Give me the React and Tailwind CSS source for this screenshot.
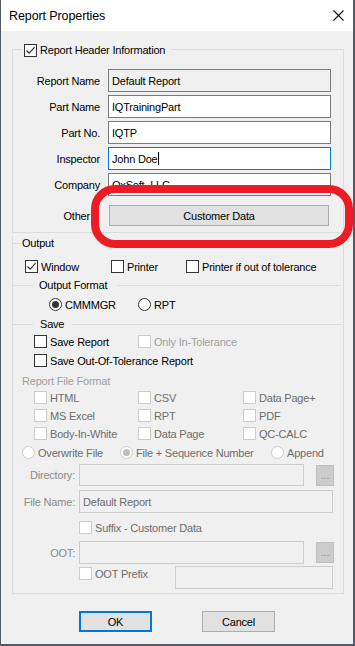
import React from 'react';

const FONT = { fontFamily: '"Liberation Sans", Arial, sans-serif' };

const Check = ({ checked, disabled }) => (
    <span className={`w-[13px] h-[13px] shrink-0 border ${disabled ? 'border-[#cccccc] bg-white' : 'border-[#333333] bg-white'} flex items-center justify-center`}>
        {checked && (
            <svg width="11" height="11" viewBox="0 0 11 11">
                <path d="M1.5 5.5 L4.2 8.2 L9.6 2.2" fill="none" stroke="#333333" strokeWidth="1.2" />
            </svg>
        )}
    </span>
);

const Radio = ({ checked, disabled }) => (
    <span className={`w-[13px] h-[13px] shrink-0 rounded-full border ${disabled ? 'border-[#cccccc]' : 'border-[#333333]'} bg-white flex items-center justify-center`}>
        {checked && <span className={`w-[7px] h-[7px] rounded-full ${disabled ? 'bg-[#bcbcbc]' : 'bg-[#333333]'}`} />}
    </span>
);

const CheckItem = ({ label, checked, disabled, muted, className = '' }) => (
    <div className={`flex items-center h-[13px] gap-[3px] ${className}`}>
        <Check checked={checked} disabled={disabled} />
        <span className={disabled ? (muted ? 'text-[#a0a0a0]' : 'text-[#6d6d6d]') : 'text-black'}>{label}</span>
    </div>
);

const RadioItem = ({ label, checked, disabled, className = '' }) => (
    <div className={`flex items-center h-[13px] gap-[3px] ${className}`}>
        <Radio checked={checked} disabled={disabled} />
        <span className={disabled ? 'text-[#6d6d6d]' : 'text-black'}>{label}</span>
    </div>
);

const HeaderRow = ({ label, value, tone = 'white', caret, first }) => {
    const box = {
        gray: 'bg-[#f0f0f0] border-[#7a7a7a]',
        white: 'bg-white border-[#7a7a7a]',
        focus: 'bg-white border-[#0078d7]',
    }[tone];
    return (
        <div className={`flex items-center h-[23px] ${first ? 'mt-[12px]' : 'mt-[3px]'}`}>
            <span className="w-[87px] text-right">{label}</span>
            <div className={`ml-[8px] w-[223px] h-[23px] border ${box} flex items-center pl-[3px]`}>
                <span>{value}</span>
                {caret && <span className="w-px h-[13px] bg-black" />}
            </div>
        </div>
    );
};

const Separator = ({ label, labelGap, tailGap, endGap }) => (
    <div className="flex items-center h-[14px]">
        <div className="-ml-px w-[21px] h-px bg-[#dcdcdc]" />
        <span className={labelGap}>{label}</span>
        <div className={`flex-1 h-px bg-[#dcdcdc] ${tailGap} ${endGap}`} />
    </div>
);

const Browse = () => (
    <div className="ml-[12px] w-[18px] h-[21px] bg-[#cccccc] border border-[#bfbfbf] flex items-end justify-center pb-[4px] text-[#8a8a8a] leading-none">
        ...
    </div>
);

export default function App() {
    return (
        <div style={FONT} className="w-[355px] h-[646px] bg-[#f0f0f0] border-l border-r-2 border-b-2 border-[#535b67] text-[11px] tracking-[-0.2px] text-black leading-[14px] relative overflow-hidden">
            {/* Title bar */}
            <div className="h-[31px] bg-white flex items-center justify-between pl-[8px] pr-[9px]">
                <span className="text-[12.5px] tracking-[-0.1px]">Report Properties</span>
                <svg width="11" height="11" viewBox="0 0 11 11">
                    <path d="M0.5 0.5 L10.5 10.5 M10.5 0.5 L0.5 10.5" stroke="#111111" strokeWidth="1.1" />
                </svg>
            </div>

            <div className="pl-[11px] pr-[9px]">
                {/* Report Header Information */}
                <div className="mt-[18px] border border-[#dcdcdc] pb-[6px]">
                    <div className="-mt-[7px] ml-[9px] flex">
                        <div className="flex items-center gap-[3px] bg-[#f0f0f0] pl-[2px] pr-[6px]">
                            <Check checked />
                            <span>Report Header Information</span>
                        </div>
                    </div>
                    <HeaderRow first label="Report Name" value="Default Report" tone="gray" />
                    <HeaderRow label="Part Name" value="IQTrainingPart" />
                    <HeaderRow label="Part No." value="IQTP" />
                    <HeaderRow label="Inspector" value="John Doe" tone="focus" caret />
                    <HeaderRow label="Company" value="QxSoft, LLC" />
                    <div className="flex items-center mt-[9px] h-[21px]">
                        <span className="w-[87px] text-right pr-[10px]">Other</span>
                        <button className="ml-[9px] w-[220px] h-[21px] bg-[#e1e1e1] border border-[#adadad] flex items-center justify-center">
                            Customer Data
                        </button>
                    </div>
                </div>

                {/* Output */}
                <div className="mt-[10px] border-x border-b border-[#dcdcdc] pb-[4px]">
                    <div className="-mt-[7px] flex items-center h-[14px]">
                        <div className="-ml-px w-[9px] h-px bg-[#dcdcdc]" />
                        <span className="ml-[1px]">Output</span>
                    </div>
                    <div className="mt-[10px] pl-[12px] flex">
                        <CheckItem className="w-[86px]" label="Window" checked />
                        <CheckItem className="w-[75px]" label="Printer" />
                        <CheckItem label="Printer if out of tolerance" />
                    </div>

                    <div className="mt-[5px]">
                        <Separator label="Output Format" labelGap="ml-[6px]" tailGap="ml-[10px]" endGap="mr-[3px]" />
                    </div>
                    <div className="mt-[6px] pl-[36px] flex">
                        <RadioItem className="w-[89px]" label="CMMMGR" checked />
                        <RadioItem label="RPT" />
                    </div>

                    <div className="mt-[6px]">
                        <Separator label="Save" labelGap="ml-[7px]" tailGap="ml-[8px]" endGap="mr-[1px]" />
                    </div>
                    <div className="mt-[4px] pl-[21px] flex">
                        <CheckItem className="w-[104px]" label="Save Report" />
                        <CheckItem label="Only In-Tolerance" disabled muted />
                    </div>
                    <div className="mt-[6px] pl-[21px] flex">
                        <CheckItem label="Save Out-Of-Tolerance Report" />
                    </div>

                    <div className="mt-[7px] pl-[9px] text-[#a0a0a0]">Report File Format</div>
                    <div className="mt-[3px] pl-[21px] grid grid-cols-[104px_105px_1fr] gap-y-[5px]">
                        {['HTML', 'CSV', 'Data Page+', 'MS Excel', 'RPT', 'PDF', 'Body-In-White', 'Data Page', 'QC-CALC'].map(item => (
                            <CheckItem key={item} label={item} disabled />
                        ))}
                    </div>

                    <div className="mt-[6px] pl-[9px] flex">
                        <RadioItem className="w-[98px]" label="Overwrite File" disabled />
                        <RadioItem className="w-[151px]" label="File + Sequence Number" checked disabled />
                        <RadioItem label="Append" disabled />
                    </div>

                    <div className="mt-[5px] flex items-center">
                        <span className="w-[62px] text-right text-[#8a8a8a]">Directory:</span>
                        <div className="ml-[4px] w-[225px] h-[22px] border border-[#cccccc] bg-[#f0f0f0]" />
                        <Browse />
                    </div>
                    <div className="mt-[4px] flex items-center">
                        <span className="w-[62px] text-right text-[#8a8a8a]">File Name:</span>
                        <div className="ml-[4px] w-[254px] h-[23px] border border-[#cccccc] bg-[#f0f0f0] flex items-center pl-[3px] text-[#6d6d6d]">
                            Default Report
                        </div>
                    </div>
                    <div className="mt-[8px] pl-[66px] flex">
                        <CheckItem label="Suffix - Customer Data" disabled />
                    </div>
                    <div className="mt-[7px] flex items-center">
                        <span className="w-[62px] text-right text-[#8a8a8a]">OOT:</span>
                        <div className="ml-[4px] w-[225px] h-[23px] border border-[#cccccc] bg-[#f0f0f0]" />
                        <Browse />
                    </div>
                    <div className="mt-[2px] pl-[66px] flex items-start">
                        <CheckItem className="mt-[1px] w-[96px]" label="OOT Prefix" disabled />
                        <div className="w-[158px] h-[23px] border border-[#cccccc] bg-[#f0f0f0]" />
                    </div>
                </div>

                {/* Buttons */}
                <div className="mt-[17px] pl-[67px] flex gap-[50px]">
                    <button className="w-[73px] h-[21px] bg-[#e1e1e1] border-2 border-[#0078d7] flex items-center justify-center">OK</button>
                    <button className="w-[73px] h-[21px] bg-[#e1e1e1] border border-[#adadad] flex items-center justify-center">Cancel</button>
                </div>
            </div>

            {/* Red annotation marker over the Customer Data button */}
            <div className="absolute left-[90px] top-[185px] w-[262px] h-[63px] border-[8px] border-[#ed1c24] rounded-[24px] pointer-events-none" />
        </div>
    );
}
